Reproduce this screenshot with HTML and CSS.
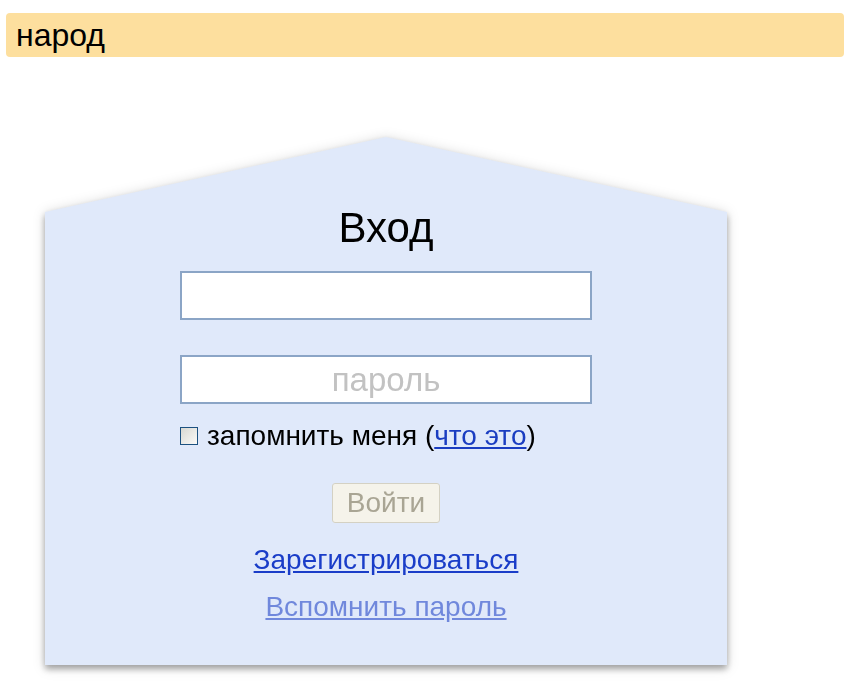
FILE: index.html
```html
<!DOCTYPE html>
<html lang="ru">
  <head>
    <meta charset="UTF-8" />
    <title>Народ — вход</title>
    <link rel="stylesheet" href="styles.css">
  </head>
  <body>
    <div class="top-bar">народ</div>
    <div class="house">
      <form class="house-body">
        <h1 class="title">Вход</h1>
        <div class="fields">
          <input type="text" class="field" />
          <input type="password" class="field" placeholder="пароль" />
          <label class="remember">
            <input type="checkbox" class="check" />
            <span>запомнить меня (<a href="#">что это</a>)</span>
          </label>
        </div>
        <button type="button" class="login-btn" disabled>Войти</button>
        <a href="#" class="register">Зарегистрироваться</a>
        <a href="#" class="forgot">Вспомнить пароль</a>
      </form>
    </div>
  </body>
</html>
```

FILE: styles.css
```css
body {
  margin: 0;
  padding: 0 0 30px;
  background: #fff;
  font-family: "Liberation Sans", Arial, sans-serif;
  color: #000;
}

.top-bar {
  margin: 13px 10px 0 6px;
  height: 44px;
  line-height: 44px;
  padding-left: 10px;
  background-color: #fddf9e;
  border-radius: 4px;
  font-size: 32px;
}

.house {
  width: 682px;
  margin: 80px 0 0 45px;
  padding-bottom: 12px;
  filter: drop-shadow(0 4px 3px rgba(0, 0, 0, 0.3)) drop-shadow(0 1px 6px rgba(0, 0, 0, 0.15));
}

.house-body {
  box-sizing: border-box;
  height: 528px;
  padding-top: 69px;
  margin: 0;
  background-color: #e0e9fa;
  clip-path: polygon(0 75px, 50% 0, 100% 75px, 100% 100%, 0 100%);
  display: flex;
  flex-direction: column;
  align-items: center;
}

.title {
  margin: 0;
  font-size: 42px;
  font-weight: normal;
  line-height: 44px;
}

.fields {
  width: 412px;
  margin-top: 21px;
  display: flex;
  flex-direction: column;
}

.field {
  box-sizing: border-box;
  width: 412px;
  height: 49px;
  margin: 0 0 35px;
  border: 2px solid #8ba5c6;
  background: #fff;
  font-family: inherit;
  font-size: 33px;
  text-align: center;
  outline: none;
}

.field + .field {
  margin-bottom: 0;
}

.field::placeholder {
  color: #c2c2c2;
}

.remember {
  display: flex;
  align-items: center;
  gap: 9px;
  margin-top: 16px;
  font-size: 28px;
  line-height: 32px;
}

.check {
  appearance: none;
  box-sizing: border-box;
  width: 18px;
  height: 18px;
  margin: 0;
  border: 1px solid #1c5180;
  background: linear-gradient(135deg, #d8d8d2, #fafaf8);
}

.remember a {
  color: #1a3dc1;
}

.login-btn {
  box-sizing: border-box;
  width: 108px;
  height: 40px;
  margin-top: 31px;
  padding: 0;
  border: 1px solid #d4d1c3;
  border-radius: 3px;
  background-color: #f5f3ea;
  color: #a9a594;
  font-family: inherit;
  font-size: 28px;
}

.register,
.forgot {
  font-size: 28px;
  line-height: 32px;
}

.register {
  margin-top: 21px;
  color: #1a3dc8;
}

.forgot {
  margin-top: 15px;
  color: #7088dc;
}
```
